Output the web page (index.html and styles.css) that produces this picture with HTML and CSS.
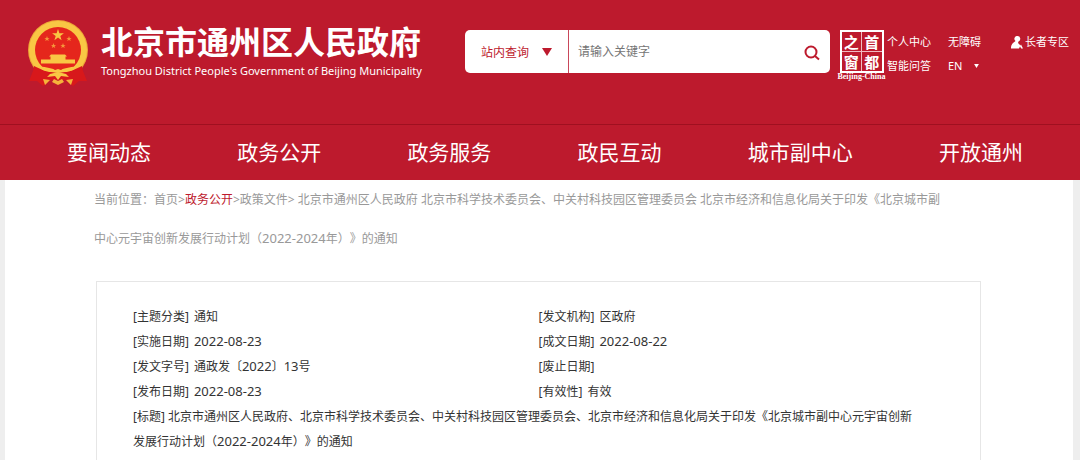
FILE: index.html
```html
<!DOCTYPE html>
<html lang="zh-CN">
<head>
<meta charset="utf-8">
<title>北京市通州区人民政府</title>
<meta name="viewport" content="width=device-width, initial-scale=1">
<link rel="stylesheet" href="styles.css">
</head>
<body>
<header class="site-header">
  <div class="top">
    <a class="brand" href="#">
      <svg class="emblem" viewBox="0 0 66 70" aria-hidden="true">
        <circle cx="33" cy="32" r="30" fill="#eda537"/>
        <circle cx="33" cy="32" r="29" fill="#f9c744"/>
        <circle cx="33" cy="32" r="23" fill="#e5261c"/>
        <path fill="#f9c744" d="M33 11l1.400 4.200h4.500l-3.600 2.700 1.300 4.300-3.600-2.600-3.600 2.600 1.300-4.300-3.600-2.700h4.500z"/>
        <g fill="#f5953b">
          <path d="M22 18l.7 1.900h2l-1.600 1.200.6 2-1.700-1.200-1.700 1.200.6-2-1.600-1.200h2zM44 18l.7 1.900h2l-1.600 1.200.6 2-1.700-1.200-1.700 1.200.6-2-1.600-1.200h2zM28.500 25l.7 1.900h2l-1.600 1.200.6 2-1.700-1.200-1.700 1.200.6-2-1.600-1.200h2zM38 25l.7 1.900h2l-1.600 1.200.6 2-1.700-1.200-1.700 1.200.6-2-1.600-1.200h2z"/>
        </g>
        <path fill="#f9c744" d="M26 36.500h14l2 2h-1.500v3H50v4H16v-4h9.500v-3H24z"/>
        <path fill="#d8181b" d="M9 48c6 3 11 5 15 5l9-2 9 2c4 0 9-2 15-5l1 5 4 10-8 0-6 5-8-6H26l-8 6-6-5-8 0 4-10z"/>
        <path fill="#f9c744" d="M13 47c5 3 13 2 17 5l3-1 3 1c4-3 12-2 17-5-3 5-8 7-13 7l-7 1-7-1c-5 0-10-2-13-7z"/>
        <path fill="#f9c744" d="M25 56l8-2 8 2 3 3-8-1-3 4-3-4-8 1z"/>
        <path fill="#f5b33b" d="M18 61l7 1-5 5zM48 61l-7 1 5 5zM29 61l4 2 4-2 2 3-6 3-6-3z"/>
      </svg>
      <span class="brand-text">
        <strong class="brand-name">北京市通州区人民政府</strong>
        <span class="brand-en">Tongzhou District People's Government of Beijing Municipality</span>
      </span>
    </a>
    <form class="search">
      <button class="scope" type="button">站内查询
        <svg class="caret" viewBox="0 0 10 8" aria-hidden="true"><path d="M0 0h10L5 8z" fill="currentColor"/></svg>
      </button>
      <input class="query" type="text" placeholder="请输入关键字" aria-label="请输入关键字">
      <button class="go" type="submit" aria-label="搜索">
        <svg viewBox="0 0 16 16" aria-hidden="true"><circle cx="7" cy="7" r="5.500"/><path d="M11 11l4 3.500"/></svg>
      </button>
    </form>
    <a class="seal" href="#">
      <span class="seal-box"><span>之</span><span>首</span><span>窗</span><span>都</span></span>
      <span class="seal-en">Beijing-China</span>
    </a>
    <div class="links">
      <a href="#">个人中心</a><a href="#">无障碍</a>
      <a href="#">智能问答</a><button class="lang" type="button">EN <svg viewBox="0 0 6 5" aria-hidden="true"><path d="M0 0h6L3 5z" fill="currentColor"/></svg></button>
    </div>
    <a class="elder" href="#">
      <svg viewBox="0 0 12 13" aria-hidden="true"><path fill="currentColor" d="M6.500 0a2.800 2.800 0 0 1 1 5.400L7 7l2.500 2.500L8 12.500H0C0 9 1 7.500 4.500 5A2.800 2.800 0 0 1 6.500 0zM10 8.500l2 4h-1.800L9 10.500z"/></svg>
      长者专区
    </a>
  </div>
  <nav class="nav">
    <a href="#">要闻动态</a>
    <a href="#">政务公开</a>
    <a href="#">政务服务</a>
    <a href="#">政民互动</a>
    <a href="#">城市副中心</a>
    <a href="#">开放通州</a>
  </nav>
</header>
<main class="page">
  <p class="crumbs">当前位置：<a href="#">首页</a>&gt;<a class="current" href="#">政务公开</a>&gt;<a href="#">政策文件</a>&gt; 北京市通州区人民政府 北京市科学技术委员会、中关村科技园区管理委员会 北京市经济和信息化局关于印发《北京城市副<br>中心元宇宙创新发展行动计划（<span class="num">2022-2024</span>年）》的通知</p>
  <dl class="info">
    <div><dt>[主题分类]</dt><dd>通知</dd></div>
    <div><dt>[发文机构]</dt><dd>区政府</dd></div>
    <div><dt>[实施日期]</dt><dd class="num">2022-08-23</dd></div>
    <div><dt>[成文日期]</dt><dd class="num">2022-08-22</dd></div>
    <div><dt>[发文字号]</dt><dd>通政发〔<span class="num">2022</span>〕<span class="num">13</span>号</dd></div>
    <div><dt>[废止日期]</dt><dd></dd></div>
    <div><dt>[发布日期]</dt><dd class="num">2022-08-23</dd></div>
    <div><dt>[有效性]</dt><dd>有效</dd></div>
    <div class="wide"><dt>[标题]</dt> <dd>北京市通州区人民政府、北京市科学技术委员会、中关村科技园区管理委员会、北京市经济和信息化局关于印发《北京城市副中心元宇宙创新<br>发展行动计划（<span class="num">2022-2024</span>年）》的通知</dd></div>
  </dl>
</main>
</body>
</html>
```
FILE: styles.css
```css
* { box-sizing: border-box; }
body {
  margin: 0;
  background: #eee;
  color: #333;
  font-family: "Noto Sans", "Noto Sans CJK SC", sans-serif;
  font-size: 12px;
  text-spacing-trim: space-all;
}
a { color: inherit; text-decoration: none; }
button, input { border: 0; background: none; padding: 0; font: inherit; color: inherit; }
.site-header { background: #bd1a2d; color: #fff; }
.top {
  display: flex;
  align-items: flex-start;
  height: 124px;
  padding: 0 11px 0 25px;
}
.brand { display: flex; gap: 10px; padding-top: 18px; }
.emblem { width: 66px; height: 70px; }
.brand-text { display: flex; flex-direction: column; padding-top: 4px; white-space: nowrap; }
.brand-name { font-size: 32px; line-height: 40px; font-weight: 700; }
.brand-en { font-size: 11px; line-height: 18px; }
.search {
  display: flex;
  flex: 1;
  margin: 30px 7px 0 auto;
  max-width: 365px;
  height: 43px;
  background: #fff;
  border-radius: 5px;
}
.scope {
  display: flex;
  align-items: center;
  gap: 13px;
  width: 104px;
  padding-left: 16px;
  border-right: 1px solid #c9485a;
  color: #bd1a2d;
}
.caret { width: 10px; height: 8px; }
.query { flex: 1; min-width: 0; padding-left: 9px; outline: 0; }
.query::placeholder { color: #757575; opacity: 1; }
.go { width: 36px; color: #bd1a2d; }
.go svg { display: block; width: 16px; height: 16px; margin: 2px auto 0 10px; fill: none; stroke: currentColor; stroke-width: 2; }
.seal { display: flex; flex-direction: column; align-items: center; width: 49px; margin-top: 30px; white-space: nowrap; }
.seal-box {
  display: grid;
  grid-template-columns: 1fr 1fr;
  grid-template-rows: 1fr 1fr;
  width: 44px;
  height: 43px;
  border: 2px solid #fff;
  gap: 1px;
  background: #f0b9bf;
}
.seal-box span {
  background: #bd1a2d;
  font-family: "Noto Sans CJK SC", sans-serif;
  font-size: 15px;
  line-height: 19px;
  text-align: center;
  font-weight: 700;
}
.seal-en { font: bold 8px/8px "Liberation Serif", serif; }
.links {
  display: grid;
  grid-template-columns: 61px 50px;
  grid-auto-rows: 24px;
  margin: 30px 0 0 1px;
  font-size: 11px;
  line-height: 24px;
}
.lang { display: flex; align-items: center; gap: 12px; }
.lang svg { width: 5px; height: 4px; }
.elder { display: flex; align-items: center; gap: 2px; margin: 30px 0 0 13px; font-size: 11px; line-height: 24px; white-space: nowrap; }
.elder svg { width: 12px; height: 13px; }
.nav {
  display: flex;
  justify-content: space-between;
  padding: 0 57px 0 67px;
  border-top: 1px solid #9f1020;
  font-size: 21px;
  line-height: 55px;
}
.page { margin: 0 7px 0 5px; padding: 0 92px 0 89px; background: #fff; }
.crumbs { margin: 0; color: #999; line-height: 39px; }
.current { color: #bd1a2d; }
.num { font-size: 13px; }
.info {
  display: grid;
  grid-template-columns: 1fr 1fr;
  margin: 23px 0 0 2px;
  padding: 22px 36px 24px;
  border: 1px solid #e6e6e6;
  line-height: 25px;
}
.info div { display: flex; gap: 5px; }
.info dd { margin: 0; }
.info .wide { grid-column: 1 / -1; display: block; }
.wide dt, .wide dd { display: inline; }
```
